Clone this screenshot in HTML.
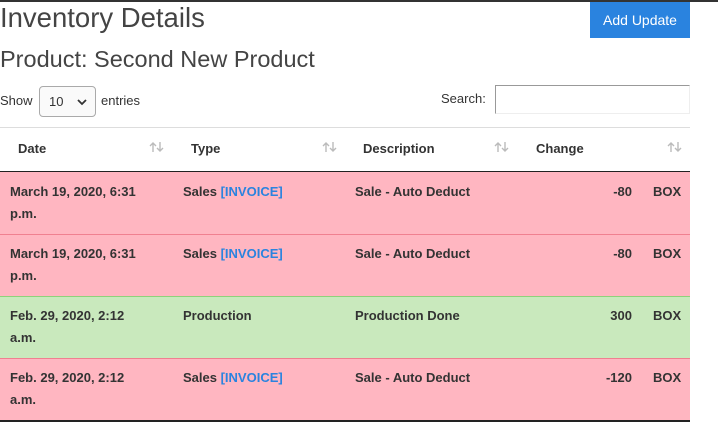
<!DOCTYPE html>
<html><head><style>
body{margin:0;width:718px;height:430px;background:#fff;font-family:"Liberation Sans",sans-serif;color:#333;position:relative;overflow:hidden}
.a{position:absolute;white-space:nowrap}
.topbar{position:absolute;left:0;top:0;width:718px;height:2px;background:#333}
.btn{position:absolute;left:590px;top:2px;width:100px;height:36px;background:#2a83df;color:#fff;font-size:14px;line-height:36px;text-align:center}
.row{position:absolute;left:0;width:690px;height:62px}
.pink{background:#ffb6c1;border-top:1px solid #f08090}
.green{background:#c9e9bd;border-top:1px solid #8ed27a}
.b{font-weight:bold;font-size:13px;line-height:22px}
.inv{color:#2a83df}
.arr{position:absolute;top:142px}
</style></head><body>
<div class="topbar"></div>
<div class="a" style="left:0;top:2px;font-size:27.5px;color:#444">Inventory Details</div>
<div class="btn">Add Update</div>
<div class="a" style="left:0;top:46px;font-size:23.5px;color:#444">Product: Second New Product</div>
<div class="a" style="left:0;top:93px;font-size:13px">Show</div>
<div class="a" style="left:39px;top:86px;width:57px;height:31px;border:1px solid #aaa;border-radius:4px;background:#fafafa;box-sizing:border-box;font-size:13px;line-height:29px;padding-left:9px">10<svg style="position:absolute;left:37px;top:11px" width="10" height="8" viewBox="0 0 10 8"><path d="M1 2 L5 6 L9 2" fill="none" stroke="#333" stroke-width="1.8"/></svg></div>
<div class="a" style="left:101px;top:93px;font-size:13px">entries</div>
<div class="a" style="left:441px;top:91px;font-size:13px">Search:</div>
<div class="a" style="left:495px;top:85px;width:195px;height:29px;border:1px solid #999;border-right-color:#eee;border-bottom-color:#eee;box-sizing:border-box"></div>
<div class="a" style="left:0;top:127px;width:690px;height:1px;background:#ddd"></div>
<div class="a b" style="left:18px;top:138px">Date</div>
<div class="a b" style="left:191px;top:138px">Type</div>
<div class="a b" style="left:363px;top:138px">Description</div>
<div class="a b" style="left:536px;top:138px">Change</div>
<svg class="arr" style="left:149px" width="16" height="10" viewBox="0 0 16 10"><path d="M4 10V1M1 4L4 1L7 4M11 0V9M8 6L11 9L14 6" fill="none" stroke="#bbb" stroke-width="1.4"/></svg>
<svg class="arr" style="left:322px" width="16" height="10" viewBox="0 0 16 10"><path d="M4 10V1M1 4L4 1L7 4M11 0V9M8 6L11 9L14 6" fill="none" stroke="#bbb" stroke-width="1.4"/></svg>
<svg class="arr" style="left:494px" width="16" height="10" viewBox="0 0 16 10"><path d="M4 10V1M1 4L4 1L7 4M11 0V9M8 6L11 9L14 6" fill="none" stroke="#bbb" stroke-width="1.4"/></svg>
<svg class="arr" style="left:667px" width="16" height="10" viewBox="0 0 16 10"><path d="M4 10V1M1 4L4 1L7 4M11 0V9M8 6L11 9L14 6" fill="none" stroke="#bbb" stroke-width="1.4"/></svg>

<div class="row pink" style="top:171px;border-top:1.5px solid #222"></div>
<div class="row pink" style="top:234px"></div>
<div class="row green" style="top:296px"></div>
<div class="row pink" style="top:358px"></div>
<div class="a" style="left:0;top:420px;width:690px;height:1.5px;background:#222"></div>

<div class="a b" style="left:10px;top:181px">March 19, 2020, 6:31<br>p.m.</div>
<div class="a b" style="left:183px;top:181px">Sales <span class="inv">[INVOICE]</span></div>
<div class="a b" style="left:355px;top:181px">Sale - Auto Deduct</div>
<div class="a b" style="right:86px;top:181px">-80</div>
<div class="a b" style="left:653px;top:181px">BOX</div>

<div class="a b" style="left:10px;top:243px">March 19, 2020, 6:31<br>p.m.</div>
<div class="a b" style="left:183px;top:243px">Sales <span class="inv">[INVOICE]</span></div>
<div class="a b" style="left:355px;top:243px">Sale - Auto Deduct</div>
<div class="a b" style="right:86px;top:243px">-80</div>
<div class="a b" style="left:653px;top:243px">BOX</div>

<div class="a b" style="left:10px;top:305px">Feb. 29, 2020, 2:12<br>a.m.</div>
<div class="a b" style="left:183px;top:305px">Production</div>
<div class="a b" style="left:355px;top:305px">Production Done</div>
<div class="a b" style="right:86px;top:305px">300</div>
<div class="a b" style="left:653px;top:305px">BOX</div>

<div class="a b" style="left:10px;top:367px">Feb. 29, 2020, 2:12<br>a.m.</div>
<div class="a b" style="left:183px;top:367px">Sales <span class="inv">[INVOICE]</span></div>
<div class="a b" style="left:355px;top:367px">Sale - Auto Deduct</div>
<div class="a b" style="right:86px;top:367px">-120</div>
<div class="a b" style="left:653px;top:367px">BOX</div>
</body></html>
